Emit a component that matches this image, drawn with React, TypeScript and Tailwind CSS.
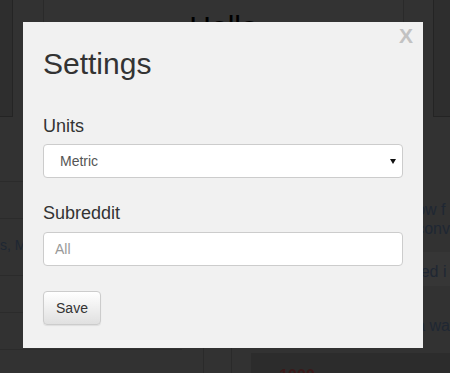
import React from "react"

const font = { fontFamily: '"Liberation Sans", Arial, sans-serif' }

function PageBehind() {
  return (
    <div className="h-[373px] w-[450px] overflow-hidden bg-[#323232]">
      {/* top row */}
      <div className="flex h-[117px]">
        <div className="w-[13px] border-b border-r border-[#242424] bg-[#2e2e2e]" />
        <div className="w-[30px]" />
        <div className="flex w-[361px] justify-center border-l border-r border-[#2a2a2a] bg-[#333333]">
          <div className="mt-[12px] text-[30px] leading-none text-black">Hello</div>
        </div>
        <div className="w-[29px]" />
        <div className="flex-1 border-b border-l border-[#242424] bg-[#2e2e2e]" />
      </div>
      {/* lower area */}
      <div className="flex">
        <div className="w-[187px]">
          <div className="h-[65px] border-b border-[#2b2b2b]" />
          <div className="h-[37px] border-b border-[#2b2b2b]" />
          <div className="h-[57px] border-b border-[#2b2b2b] pt-[16px] text-[14px] text-[#1e2733]">s, Mist</div>
          <div className="h-[37px] border-b border-[#2b2b2b]" />
          <div className="h-[37px] border-b border-[#2b2b2b]" />
        </div>
        <div className="flex w-[71px] flex-col">
          <div className="h-[231px]" />
          <div className="ml-[21px] flex h-[40px] w-[29px] border-l border-r border-[#2a2a2a]" />
        </div>
        <div className="flex flex-1 flex-col">
          <div className="h-[83px]" />
          <div className="pl-[165px] text-[16px] leading-[19px] text-[#1f2733]">
            <div>ow f</div>
            <div>conv</div>
          </div>
          <div className="h-[14px]" />
          <div className="h-[34px] bg-[#363636] pl-[165px] pt-[8px] text-[16px] text-[#1f2733]">ted i</div>
          <div className="h-[67px] pl-[165px] pt-[28px] text-[16px] text-[#1f2733]">a wa</div>
          <div className="h-[30px] bg-[#2c2c2c] pl-[28px] pt-[14px] text-[16px] font-bold leading-[18px] text-[#3a1a1a]">1000</div>
        </div>
      </div>
    </div>
  )
}

export default function App() {
  return (
    <div className="relative h-[373px] w-[450px] overflow-hidden" style={font}>
      <PageBehind />
      <div className="absolute left-[23px] top-[22px] flex h-[326px] w-[400px] flex-col bg-[#f1f1f1] px-[20px] pt-[25px]">
        <button className="absolute right-[10px] top-[1px] text-[21px] font-bold leading-[25px] text-[#c2c2c2]">X</button>
        <h1 className="text-[30px] leading-[33px] text-[#333333]">Settings</h1>

        <label className="mt-[36px] text-[18px] leading-[20px] text-[#333333]">Units</label>
        <div className="mt-[8px] flex h-[34px] items-center justify-between rounded-[4px] border border-[#cccccc] bg-white pl-[16px] pr-[6px]">
          <span className="text-[14px] text-[#555555]">Metric</span>
          <svg width="6" height="5" viewBox="0 0 6 5">
            <polygon points="0,0 6,0 3,5" fill="#111111" />
          </svg>
        </div>

        <label className="mt-[25px] text-[18px] leading-[20px] text-[#333333]">Subreddit</label>
        <div className="mt-[9px] flex h-[34px] items-center rounded-[4px] border border-[#cccccc] bg-white pl-[11px]">
          <span className="text-[14px] text-[#999999]">All</span>
        </div>

        <div className="mt-[25px]">
          <button className="h-[34px] w-[58px] rounded-[4px] border border-[#cccccc] bg-gradient-to-b from-white to-[#e0e0e0] text-[14px] text-[#333333] shadow-[0_1px_1px_rgba(0,0,0,0.08)]">
            Save
          </button>
        </div>
      </div>
    </div>
  )
}
